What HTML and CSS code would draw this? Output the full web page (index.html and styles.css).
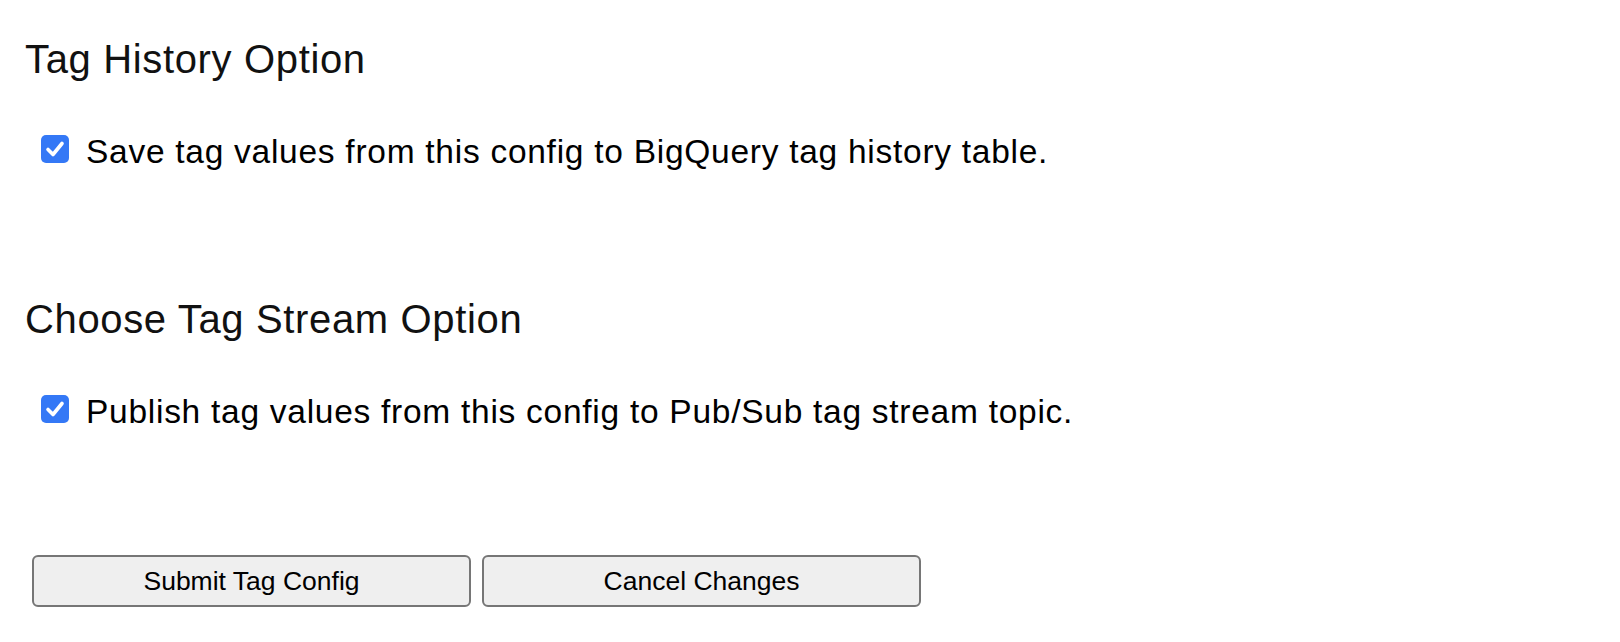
FILE: index.html
```html
<!DOCTYPE html>
<html lang="en">
<head>
<meta charset="utf-8">
<title>Tag Config Options</title>
<link rel="stylesheet" href="styles.css">
</head>
<body>
<div class="page">
  <section class="section">
    <h2 class="heading">Tag History Option</h2>
    <label class="option">
      <span class="box"><svg viewBox="0 0 28 28" width="28" height="28"><path d="M7 14.5 L12 19.5 L21 8.5" fill="none" stroke="#fff" stroke-width="3.6" stroke-linecap="round" stroke-linejoin="round"/></svg></span>
      <span class="option-text">Save tag values from this config to BigQuery tag history table.</span>
    </label>
  </section>
  <section class="section section-second">
    <h2 class="heading">Choose Tag Stream Option</h2>
    <label class="option">
      <span class="box"><svg viewBox="0 0 28 28" width="28" height="28"><path d="M7 14.5 L12 19.5 L21 8.5" fill="none" stroke="#fff" stroke-width="3.6" stroke-linecap="round" stroke-linejoin="round"/></svg></span>
      <span class="option-text">Publish tag values from this config to Pub/Sub tag stream topic.</span>
    </label>
  </section>
  <div class="actions">
    <button class="btn" type="button">Submit Tag Config</button>
    <button class="btn" type="button">Cancel Changes</button>
  </div>
</div>
</body>
</html>
```

FILE: styles.css
```css
html, body {
  margin: 0;
  padding: 0;
  background: #ffffff;
}

body {
  font-family: "Liberation Sans", Arial, Helvetica, sans-serif;
  color: #000000;
}

.page {
  padding: 36px 24px 0 25px;
}

.heading {
  margin: 0;
  font-size: 40px;
  font-weight: 300;
  line-height: 46px;
  letter-spacing: 0.65px;
  color: #111111;
}

.section-second {
  margin-top: 126px;
}

.option {
  display: flex;
  align-items: flex-start;
  gap: 17px;
  margin: 51px 0 0 16px;
  font-size: 33.5px;
  line-height: 37px;
  letter-spacing: 0.73px;
}

.box {
  flex: none;
  width: 28px;
  height: 28px;
  margin-top: 2px;
  border-radius: 5px;
  background: #3478f6;
  display: flex;
}

.box svg {
  display: block;
}

.actions {
  display: flex;
  gap: 11px;
  margin: 125px 0 0 7px;
}

.btn {
  box-sizing: border-box;
  width: 439px;
  height: 52px;
  border: 2px solid #767676;
  border-radius: 6px;
  background: #efefef;
  font-family: "Liberation Sans", Arial, Helvetica, sans-serif;
  font-size: 26.5px;
  color: #000000;
  padding: 0;
}
```
